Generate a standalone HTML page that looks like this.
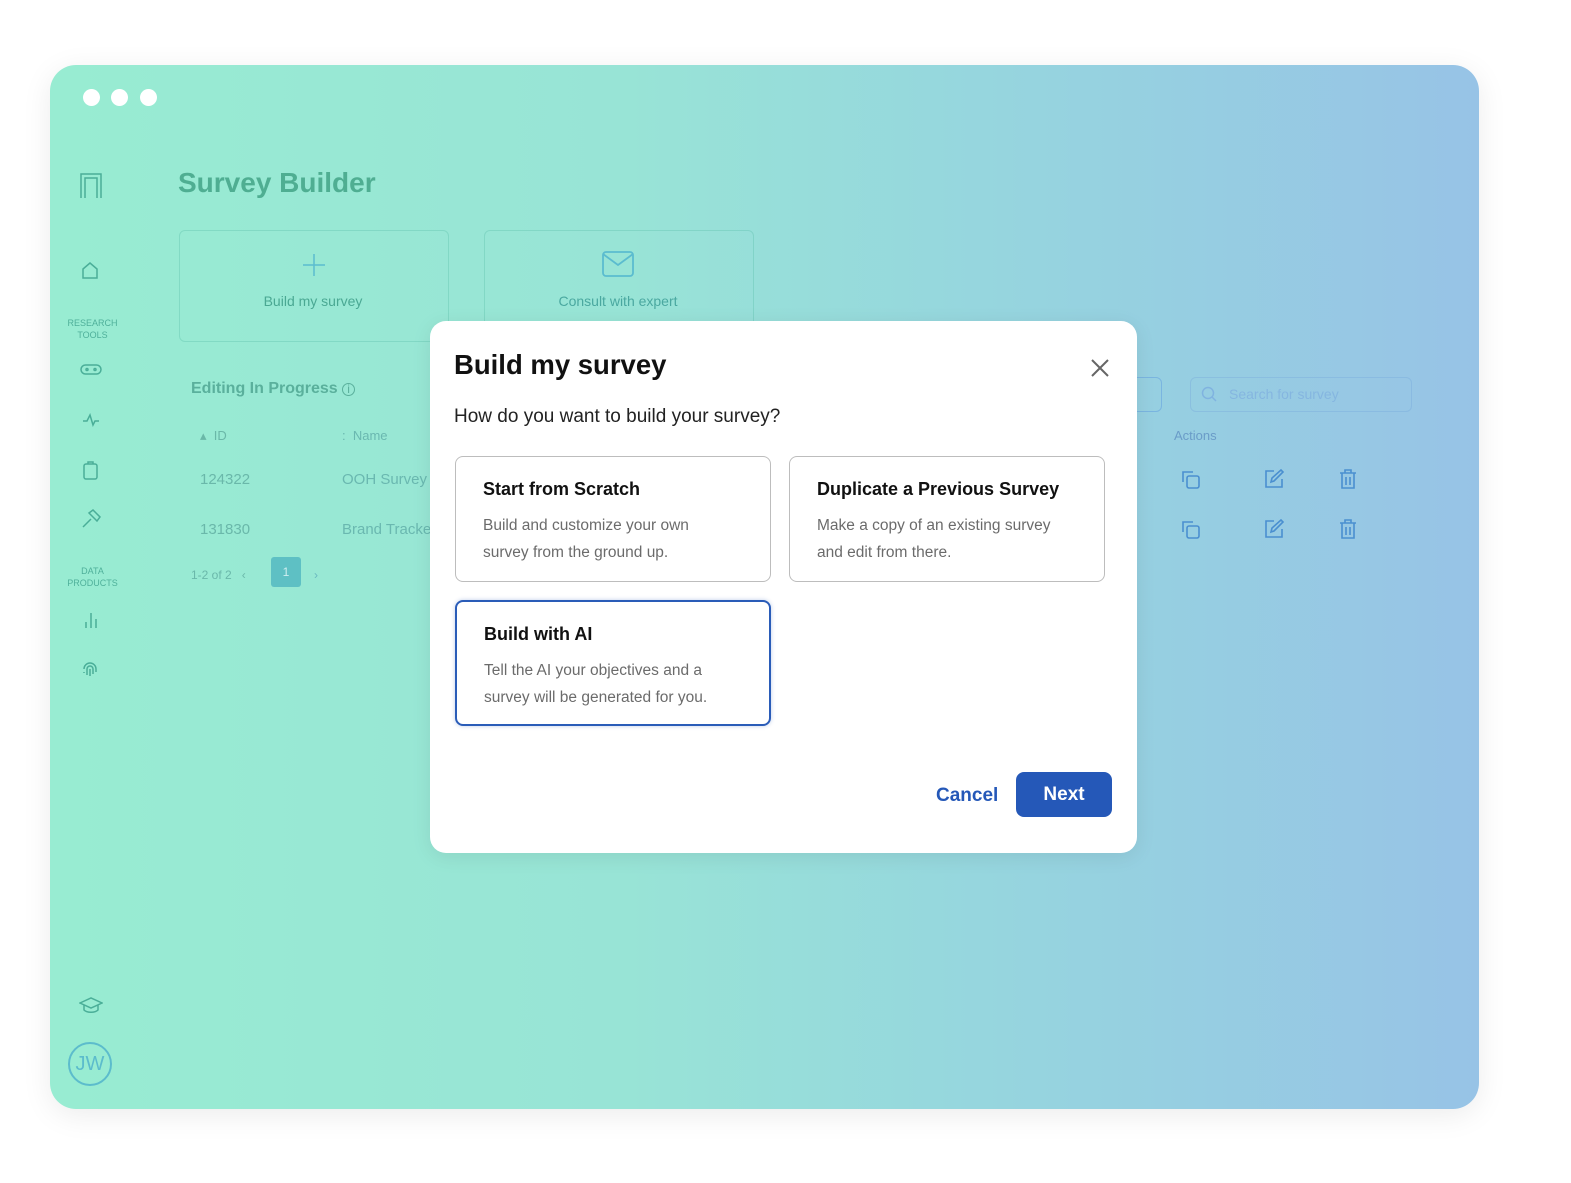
<!DOCTYPE html><html><head><style>
body{margin:0;width:1571px;height:1183px;background:#fff;font-family:"Liberation Sans",sans-serif;position:relative;overflow:hidden}
.win{position:absolute;left:50px;top:65px;width:1429px;height:1044px;border-radius:26px;background:linear-gradient(90deg,#98ecd2 0%,#98e4d6 40%,#96d6de 65%,#97c3e6 100%);box-shadow:0 6px 30px rgba(0,0,0,.08);overflow:hidden}
.a{position:absolute}
.dot{width:17px;height:17px;border-radius:50%;background:#fff;top:24px}
.t{color:#4fb09a}
.card{position:absolute;border:1px solid rgba(90,190,170,.35);border-radius:6px}
.modal{position:absolute;left:430px;top:321px;width:707px;height:532px;background:#fff;border-radius:16px;box-shadow:0 4px 20px rgba(0,0,0,.08)}
.opt{position:absolute;width:316px;height:126px;border:1.5px solid #bdbdbd;border-radius:8px;box-sizing:border-box;padding:22px 27px}
.opt h3{margin:0 0 12px;font-size:18px;font-weight:bold;color:#111}
.opt p{margin:0;font-size:15.5px;line-height:27px;color:#6b6b6b}
.ic{position:absolute;stroke:#4aae98;fill:none;stroke-width:1.5}
.bi{position:absolute;stroke:#4a8fd0;fill:none;stroke-width:1.6}
</style></head><body>
<div class="win">
<div class="a dot" style="left:33px"></div><div class="a dot" style="left:61px"></div><div class="a dot" style="left:90px"></div>
<svg class="ic" style="left:30px;top:108px" width="22" height="26" viewBox="0 0 22 26"><path d="M1 25V1h20v24M5 25V5h12v20"/></svg>
<div class="a" style="left:128px;top:102px;font-size:28px;font-weight:bold;color:#4fae92">Survey Builder</div>
<svg class="ic" style="left:31px;top:196px" width="18" height="18" viewBox="0 0 18 18"><path d="M2 8L9 2l7 6v9H2z"/></svg>
<div class="a t" style="left:10px;top:252px;width:65px;text-align:center;font-size:9px;line-height:12px">RESEARCH<br>TOOLS</div>
<svg class="ic" style="left:30px;top:298px" width="22" height="14" viewBox="0 0 22 14"><rect x="1" y="2" width="20" height="9" rx="4.5"/><circle cx="7" cy="6.5" r="1"/><circle cx="15" cy="6.5" r="1"/></svg>
<svg class="ic" style="left:32px;top:348px" width="18" height="14" viewBox="0 0 18 14"><path d="M1 8h4l3-6 3 10 2-4h4"/></svg>
<svg class="ic" style="left:33px;top:396px" width="15" height="19" viewBox="0 0 15 19"><rect x="1" y="3" width="13" height="15" rx="2"/><path d="M5 3V1h5v2"/></svg>
<svg class="ic" style="left:31px;top:444px" width="20" height="20" viewBox="0 0 20 20"><path d="M2 18l8-8M8 4l4-3 7 7-3 4z"/></svg>
<div class="a t" style="left:10px;top:500px;width:65px;text-align:center;font-size:9px;line-height:12px">DATA<br>PRODUCTS</div>
<svg class="ic" style="left:33px;top:546px" width="16" height="18" viewBox="0 0 16 18"><path d="M3 17v-6M8 17V2M13 17v-9"/></svg>
<svg class="ic" style="left:31px;top:595px" width="18" height="18" viewBox="0 0 18 18"><path d="M3 9a6 6 0 0112 0v3M6 15V9a3 3 0 016 0v5M9 9v7M3 12v1"/></svg>
<svg class="ic" style="left:29px;top:932px" width="24" height="18" viewBox="0 0 24 18"><path d="M1 6l11-5 11 5-11 5zM5 8v5c3 3 11 3 14 0V8"/></svg>
<div class="a" style="left:18px;top:977px;width:40px;height:40px;border:2px solid #5cbccc;border-radius:50%;color:#5cbccc;font-size:20px;text-align:center;line-height:40px">JW</div>
<div class="card" style="left:129px;top:165px;width:268px;height:110px"></div>
<div class="card" style="left:434px;top:165px;width:268px;height:110px"></div>
<svg class="a" style="left:252px;top:188px" width="24" height="24" stroke="#5bbccf" stroke-width="1.5"><path d="M12 1v22M1 12h22"/></svg>
<div class="a t" style="left:129px;top:228px;width:268px;text-align:center;font-size:14px;color:#4aa893">Build my survey</div>
<svg class="a" style="left:552px;top:186px" width="32" height="26" fill="none" stroke="#5bbccf" stroke-width="1.8"><rect x="1" y="1" width="30" height="24" rx="3"/><path d="M1 3l15 11 15-11"/></svg>
<div class="a t" style="left:434px;top:228px;width:268px;text-align:center;font-size:14px;color:#4aa8a0">Consult with expert</div>
<div class="a" style="left:141px;top:315px;font-size:16px;font-weight:bold;color:#5ab09c">Editing In Progress <span style="font-size:12px;font-weight:normal;border:1px solid #5ab09c;border-radius:50%;display:inline-block;width:11px;height:11px;line-height:11px;text-align:center">i</span></div>
<div class="a t" style="left:150px;top:363px;font-size:13px;color:#6ab8a8">▴ &nbsp;ID</div>
<div class="a t" style="left:292px;top:363px;font-size:13px;color:#6ab8b0">: &nbsp;Name</div>
<div class="a t" style="left:150px;top:406px;font-size:15px;color:#6ab8aa">124322</div>
<div class="a t" style="left:292px;top:406px;font-size:15px;color:#6ab8b0">OOH Survey</div>
<div class="a t" style="left:150px;top:456px;font-size:15px;color:#6ab8aa">131830</div>
<div class="a t" style="left:292px;top:456px;font-size:15px;color:#6ab8b0">Brand Tracker</div>
<div class="a t" style="left:141px;top:503px;font-size:12px;color:#6ab8aa">1-2 of 2 &nbsp;&nbsp;‹</div>
<div class="a" style="left:221px;top:492px;width:30px;height:30px;background:#5ec0c4;border-radius:3px;color:#cfeef0;font-size:12px;text-align:center;line-height:30px">1</div>
<div class="a t" style="left:264px;top:503px;font-size:12px;color:#6ab8c0">›</div>
<div class="a" style="left:1060px;top:312px;width:50px;height:33px;border:1px solid #7ab5e0;border-radius:6px"></div>
<div class="a" style="left:1140px;top:312px;width:220px;height:33px;border:1px solid rgba(120,170,220,.4);border-radius:6px"></div>
<svg class="a" style="left:1151px;top:321px" width="16" height="16" fill="none" stroke="#80b3e0" stroke-width="1.5"><circle cx="7" cy="7" r="5.5"/><path d="M11 11l4 4"/></svg>
<div class="a" style="left:1179px;top:321px;font-size:14px;color:#85b6e0">Search for survey</div>
<div class="a" style="left:1124px;top:363px;font-size:13px;color:#6a9cc8">Actions</div>
<svg class="bi" style="left:1130px;top:404px" width="22" height="22" viewBox="0 0 22 22"><path d="M3 13V3h10"/><rect x="7" y="7" width="12" height="12" rx="2"/></svg>
<svg class="bi" style="left:1213px;top:403px" width="22" height="22" viewBox="0 0 22 22"><path d="M11 3H3v16h16v-8M8 14l1-4 9-8 2 2-9 9z"/></svg>
<svg class="bi" style="left:1288px;top:403px" width="20" height="22" viewBox="0 0 20 22"><path d="M2 5h16M7 5V2h6v3M4 5v15h12V5M8 9v8M12 9v8"/></svg>
<svg class="bi" style="left:1130px;top:454px" width="22" height="22" viewBox="0 0 22 22"><path d="M3 13V3h10"/><rect x="7" y="7" width="12" height="12" rx="2"/></svg>
<svg class="bi" style="left:1213px;top:453px" width="22" height="22" viewBox="0 0 22 22"><path d="M11 3H3v16h16v-8M8 14l1-4 9-8 2 2-9 9z"/></svg>
<svg class="bi" style="left:1288px;top:453px" width="20" height="22" viewBox="0 0 20 22"><path d="M2 5h16M7 5V2h6v3M4 5v15h12V5M8 9v8M12 9v8"/></svg>
</div>
<div class="modal">
<div class="a" style="left:24px;top:28px;font-size:27.5px;font-weight:bold;color:#111">Build my survey</div>
<svg class="a" style="left:661px;top:38px" width="18" height="18" stroke="#666" stroke-width="2"><path d="M1 1l16 16M17 1L1 17"/></svg>
<div class="a" style="left:24px;top:85px;font-size:19px;color:#222">How do you want to build your survey?</div>
<div class="opt" style="left:25px;top:135px"><h3>Start from Scratch</h3><p>Build and customize your own<br>survey from the ground up.</p></div>
<div class="opt" style="left:359px;top:135px"><h3>Duplicate a Previous Survey</h3><p>Make a copy of an existing survey<br>and edit from there.</p></div>
<div class="opt" style="left:25px;top:279px;border:2px solid #2a5cb8;box-shadow:0 0 4px rgba(42,92,184,.3)"><h3>Build with AI</h3><p>Tell the AI your objectives and a<br>survey will be generated for you.</p></div>
<div class="a" style="left:506px;top:464px;font-size:19px;font-weight:bold;color:#2558b8">Cancel</div>
<div class="a" style="left:586px;top:451px;width:96px;height:45px;background:#2558b8;border-radius:8px;color:#fff;font-size:19px;font-weight:bold;text-align:center;line-height:45px">Next</div>
</div>
</body></html>
